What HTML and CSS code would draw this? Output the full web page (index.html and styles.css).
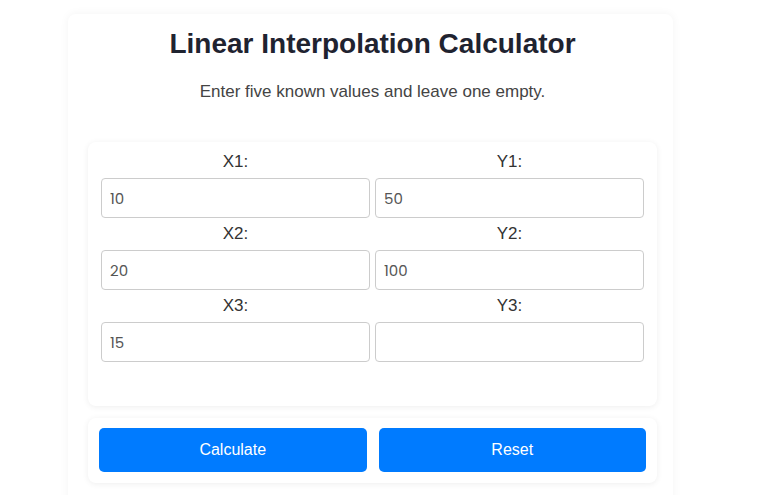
FILE: index.html
```html
<!DOCTYPE html>
<html lang="en">
<head>
    <meta charset="UTF-8">
    <meta name="viewport" content="width=device-width, initial-scale=1.0">
    <title>Linear Interpolation Calculator</title>
    <link rel="stylesheet" href="styles.css">
</head>
<body>
    <div class="container">
        <h1>Linear Interpolation Calculator</h1>
        <p class="intro">Enter five known values and leave one empty.</p>

        <div class="card form-card">
            <div class="grid">
                <div class="field">
                    <label for="x1">X1:</label>
                    <input type="text" id="x1" value="10">
                </div>
                <div class="field">
                    <label for="y1">Y1:</label>
                    <input type="text" id="y1" value="50">
                </div>
                <div class="field">
                    <label for="x2">X2:</label>
                    <input type="text" id="x2" value="20">
                </div>
                <div class="field">
                    <label for="y2">Y2:</label>
                    <input type="text" id="y2" value="100">
                </div>
                <div class="field">
                    <label for="x3">X3:</label>
                    <input type="text" id="x3" value="15">
                </div>
                <div class="field">
                    <label for="y3">Y3:</label>
                    <input type="text" id="y3" value="">
                </div>
            </div>
        </div>

        <div class="card button-card">
            <button class="button">Calculate</button>
            <button class="button">Reset</button>
        </div>
    </div>
</body>
</html>
```

FILE: styles.css
```css
body {
    font-family: 'Liberation Sans', Arial, sans-serif;
    margin: 0;
    background: #fff;
    color: #333;
}
.container {
    width: 605px;
    box-sizing: border-box;
    margin: 14px 0 0 68px;
    padding: 12px 16px 40px 20px;
    background: #fff;
    border-radius: 8px;
    box-shadow: 0 0 10px rgba(0, 0, 0, 0.05);
}
h1 {
    margin: 0;
    font-size: 28px;
    line-height: 36px;
    text-align: center;
    color: #1f2330;
}
.intro {
    margin: 18px 0 38px;
    font-size: 17px;
    line-height: 24px;
    text-align: center;
    color: #444;
}
.card {
    background: #fff;
    border-radius: 8px;
    box-shadow: 0 1px 6px rgba(0, 0, 0, 0.07);
}
.form-card {
    padding: 8px 13px 40px;
}
.grid {
    display: grid;
    grid-template-columns: 1fr 1fr;
    column-gap: 5px;
}
.field {
    margin-bottom: 4px;
}
.field label {
    display: block;
    font-size: 17px;
    line-height: 24px;
    margin-bottom: 4px;
    text-align: center;
    color: #333;
}
.field input {
    display: block;
    width: 100%;
    height: 40px;
    box-sizing: border-box;
    padding: 0 8px;
    border: 1px solid #ccc;
    border-radius: 4px;
    font-family: 'Poppins', 'Noto Sans', sans-serif;
    font-size: 15px;
    color: #555;
    background: #fff;
}
.button-card {
    margin-top: 12px;
    padding: 10px 11px 11px;
    display: flex;
    gap: 12px;
}
.button {
    flex: 1;
    height: 44px;
    background: #007bff;
    color: #fff;
    border: none;
    border-radius: 5px;
    font-family: 'Liberation Sans', Arial, sans-serif;
    font-size: 16px;
    cursor: pointer;
}
```
